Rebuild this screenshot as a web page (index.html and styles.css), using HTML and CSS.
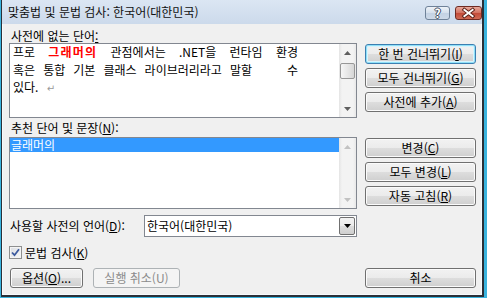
FILE: index.html
```html
<!DOCTYPE html>
<html lang="ko">
<head>
<meta charset="utf-8">
<title>맞춤법 및 문법 검사</title>
<link rel="stylesheet" href="styles.css">
</head>
<body>
<div class="window">
  <div class="titlebar">
    <span class="title">맞춤법 및 문법 검사: 한국어(대한민국)</span>
    <div class="caption-btns">
      <span class="cap-btn help">?</span>
      <span class="cap-btn close"><svg width="27" height="14" viewBox="0 0 27 14"><path d="M9 3.5 L18 10.5 M18 3.5 L9 10.5" stroke="#5a1f17" stroke-width="4" stroke-linecap="square"/><path d="M9 3.5 L18 10.5 M18 3.5 L9 10.5" stroke="#ffffff" stroke-width="2" stroke-linecap="square"/></svg></span>
    </div>
  </div>
  <div class="client">
    <div class="lbl lbl-top">사전에 없는 단어<u>:</u></div>
    <div class="box editbox">
      <div class="edit-text">
        <div class="jl">프로 <b class="err">그래머의</b> 관점에서는 .NET을 런타임 환경</div>
        <div class="split"><span class="ws">혹은 통합 기본 클래스 라이브러리라고 말할</span><span>수</span></div>
        <div>있다. <span class="para">↵</span></div>
      </div>
      <div class="vscroll">
        <div class="sb-btn"><svg width="7" height="4" viewBox="0 0 7 4"><polygon points="0,4 3.5,0 7,4" fill="#5f5f5f"/></svg></div>
        <div class="sb-track"><div class="thumb"></div></div>
        <div class="sb-btn"><svg width="7" height="4" viewBox="0 0 7 4"><polygon points="0,0 3.5,4 7,0" fill="#5f5f5f"/></svg></div>
      </div>
    </div>
    <div class="btn-group g1">
      <button class="btn default">한 번 건너뛰기(<u>I</u>)</button>
      <button class="btn">모두 건너뛰기(<u>G</u>)</button>
      <button class="btn">사전에 추가(<u>A</u>)</button>
    </div>
    <div class="lbl lbl-mid">추천 단어 및 문장(<u>N</u>):</div>
    <div class="box listbox">
      <div class="list-items"><div class="item sel">글래머의</div></div>
      <div class="vscroll">
        <div class="sb-btn"><svg width="7" height="4" viewBox="0 0 7 4"><polygon points="0,4 3.5,0 7,4" fill="#c2c2c2"/></svg></div>
        <div class="sb-track"></div>
        <div class="sb-btn"><svg width="7" height="4" viewBox="0 0 7 4"><polygon points="0,0 3.5,4 7,0" fill="#c2c2c2"/></svg></div>
      </div>
    </div>
    <div class="btn-group g2">
      <button class="btn">변경(<u>C</u>)</button>
      <button class="btn">모두 변경(<u>L</u>)</button>
      <button class="btn">자동 고침(<u>R</u>)</button>
    </div>
    <div class="lang-row">
      <span class="lang-lbl">사용할 사전의 언어(<u>D</u>):</span>
      <div class="combo">
        <span class="combo-text">한국어(대한민국)</span>
        <span class="combo-btn"><svg width="7" height="4" viewBox="0 0 7 4"><polygon points="0,0 3.5,4 7,0" fill="#000"/></svg></span>
      </div>
    </div>
    <div class="check-row">
      <span class="checkbox"><svg width="9" height="9" viewBox="0 0 9 9"><path d="M1 4.5 L3.5 7.2 L8 1.2" fill="none" stroke="#3c5a9e" stroke-width="1.8"/></svg></span>
      <span>문법 검사(<u>K</u>)</span>
    </div>
    <div class="bottom-row">
      <div class="left-btns">
        <button class="btn opt">옵션(<u>O</u>)...</button>
        <button class="btn undo" disabled>실행 취소(U)</button>
      </div>
      <button class="btn cancel">취소</button>
    </div>
  </div>
</div>
</body>
</html>
```

FILE: styles.css
```css
* { box-sizing: border-box; }
html, body { margin: 0; padding: 0; }
body {
  width: 487px;
  height: 298px;
  overflow: hidden;
  background: #3ab4df;
  font-family: "Noto Sans CJK KR", "Liberation Sans", sans-serif;
  font-size: 12px;
  color: #000;
}
u { text-decoration: underline; text-underline-offset: 1px; }

.window {
  margin-left: 1px;
  width: 483px;
  height: 297px;
  border-style: solid;
  border-color: #2a3038;
  border-width: 0 2px 2px 1px;
  background: #f0f0f0;
  display: flex;
  flex-direction: column;
}

.titlebar {
  height: 24px;
  flex: none;
  display: flex;
  justify-content: space-between;
  align-items: flex-start;
  background: linear-gradient(#dbe6f3, #ccdaeb);
}
.title {
  line-height: 24px;
  padding-left: 6px;
  color: #111;
}
.caption-btns {
  display: flex;
  gap: 5px;
  padding-top: 6px;
}
.cap-btn {
  height: 14px;
  border-radius: 3px;
  display: flex;
  align-items: center;
  justify-content: center;
}
.help {
  width: 25px;
  border: 1px solid #6f8299;
  background: linear-gradient(#eef3f9, #d4dfec 50%, #c3d2e4 51%, #cdd9e8);
  color: #fff;
  font-weight: bold;
  font-size: 12px;
  line-height: 12px;
  text-shadow: 1px 0 #3e4c5e, -1px 0 #3e4c5e, 0 1px #3e4c5e, 0 -1px #3e4c5e;
}
.close {
  width: 27px;
  border: 1px solid #6e2a22;
  background: linear-gradient(#e8a99b, #d2705f 50%, #c24a38 51%, #d06a55);
}

.client {
  flex: 1;
  min-height: 0;
  border: 1px solid #f7fafd;
  border-top: 0;
  display: grid;
  grid-template-columns: 348px 111px;
  grid-template-rows: 19px 75px 19px 72px 28px 22px 29px;
  align-content: start;
  column-gap: 8px;
  padding: 0 5px 0 6px;
}

.lbl-top { grid-column: 1; grid-row: 1; }
.editbox { grid-column: 1; grid-row: 2; }
.g1 { grid-column: 2; grid-row: 2; }
.lbl-mid { grid-column: 1; grid-row: 3; }
.listbox { grid-column: 1; grid-row: 4; }
.g2 { grid-column: 2; grid-row: 4; }
.lang-row { grid-column: 1; grid-row: 5; }
.check-row { grid-column: 1; grid-row: 6; }
.bottom-row { grid-column: 1 / -1; grid-row: 7; }

.lbl { padding-left: 2px; }
.lbl-top { align-self: end; line-height: 15px; }
.lbl-mid { line-height: 19px; }

.box {
  border: 1px solid #828790;
  background: #fff;
  display: flex;
  min-width: 0;
}
.edit-text {
  flex: 1;
  min-width: 0;
  overflow: hidden;
  padding: 0 41px 0 3px;
  margin-top: -1px;
  font-size: 12px;
  line-height: 17.5px;
  white-space: nowrap;
}
.jl { text-align: justify; text-align-last: justify; }
.split { display: flex; justify-content: space-between; }
.ws { word-spacing: 4.7px; }
.err { color: #ff0000; font-weight: bold; letter-spacing: 1.2px; }
.para { color: #9a9a9a; font-family: "DejaVu Sans", sans-serif; font-size: 10px; margin-left: 5px; }

.vscroll {
  width: 17px;
  flex: none;
  display: flex;
  flex-direction: column;
  background: linear-gradient(to right, #e4e4e4, #f3f3f3 3px, #f3f3f3 14px, #e8e8e8);
}
.sb-btn {
  height: 17px;
  flex: none;
  display: flex;
  align-items: center;
  justify-content: center;
}
.sb-track {
  flex: 1;
  padding: 2px 1px 0 1px;
}
.thumb {
  height: 16px;
  border: 1px solid #979797;
  border-radius: 2px;
  background: linear-gradient(to right, #f6f6f6, #e7e7e7 50%, #d6d6d6);
}

.list-items { flex: 1; }
.item {
  height: 14px;
  line-height: 14px;
  padding-left: 1px;
}
.sel { background: #3399ff; color: #fff; }

.btn-group {
  display: flex;
  flex-direction: column;
  gap: 4px;
  padding-top: 1px;
}
.btn {
  font: inherit;
  color: #000;
  margin: 0;
  padding: 0;
  height: 20px;
  line-height: 18px;
  border: 1px solid #707070;
  border-radius: 3px;
  background: linear-gradient(#f2f2f2, #ebebeb 50%, #dddddd 51%, #cfcfcf);
  box-shadow: inset 0 0 0 1px #fbfbfb;
  text-align: center;
  white-space: nowrap;
}
.btn.default {
  border-color: #3c7fb1;
  box-shadow: inset 0 0 0 1px #8fe0f8, inset 0 0 0 2px #d9f3fc;
}
.btn:disabled {
  color: #8b8b8b;
  border-color: #adb2b5;
  background: #f4f4f4;
  box-shadow: none;
}

.lang-row {
  align-self: end;
  height: 22px;
  display: flex;
  align-items: center;
}
.lang-lbl { padding-left: 1px; line-height: 22px; }
.combo {
  margin-left: auto;
  width: 213px;
  height: 22px;
  border: 1px solid #828790;
  background: #fff;
  display: flex;
  align-items: stretch;
}
.combo-text { flex: 1; padding-left: 2px; line-height: 20px; }
.combo-btn {
  width: 16px;
  margin: 1px 1px 1px 0;
  border: 1px solid #707070;
  border-radius: 2px;
  background: linear-gradient(#f2f2f2, #ebebeb 50%, #dddddd 51%, #cfcfcf);
  display: flex;
  align-items: center;
  justify-content: center;
}

.check-row {
  align-self: end;
  height: 13px;
  display: flex;
  align-items: center;
  gap: 3px;
  line-height: 13px;
}
.checkbox {
  width: 13px;
  height: 13px;
  border: 1px solid #8e8f8f;
  background: linear-gradient(135deg, #dadde2, #f8f8f8);
  box-shadow: inset 0 0 0 1px #f4f4f4;
  display: flex;
  align-items: center;
  justify-content: center;
}

.bottom-row {
  align-self: end;
  display: flex;
  justify-content: space-between;
}
.left-btns { display: flex; gap: 10px; padding-left: 1px; }
.opt { width: 73px; }
.undo { width: 87px; }
.cancel { width: 111px; }
```
